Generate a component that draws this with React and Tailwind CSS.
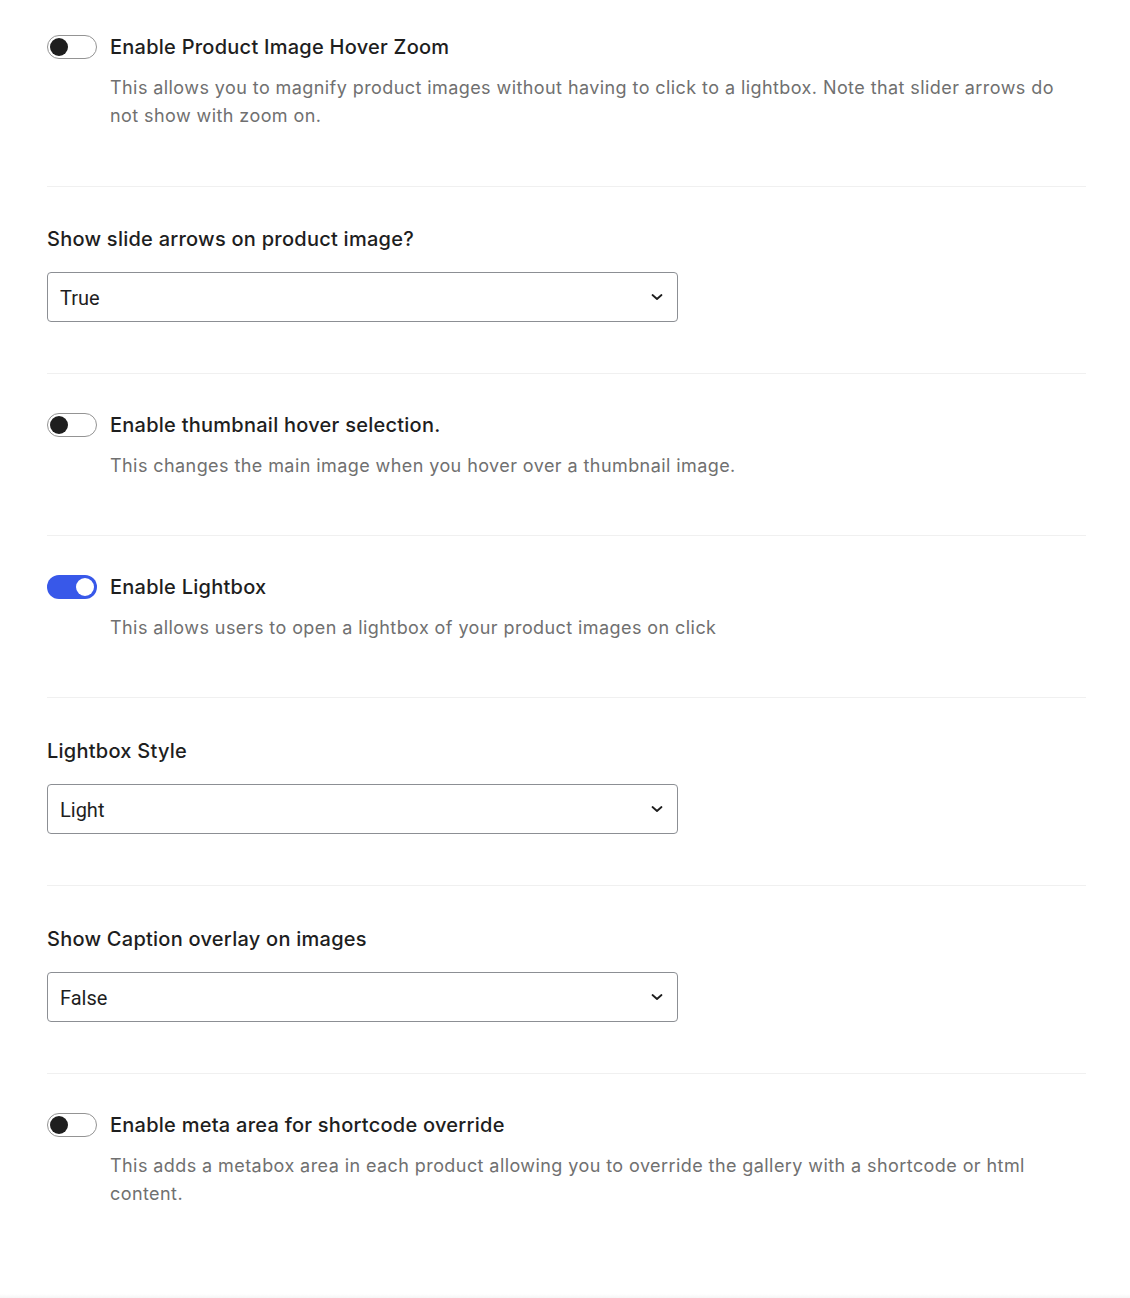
import React from 'react';

const font = { fontFamily: 'Inter, "Noto Sans", sans-serif' };

function Toggle({ on }) {
  return on ? (
    <div className="w-[50px] h-[24px] rounded-full bg-[#3858e9] flex items-center justify-end px-[3px] shrink-0">
      <div className="w-[18px] h-[18px] rounded-full bg-white" />
    </div>
  ) : (
    <div className="w-[50px] h-[24px] rounded-full border border-[#949494] bg-white flex items-center px-[2px] shrink-0">
      <div className="w-[18px] h-[18px] rounded-full bg-[#1e1e1e]" />
    </div>
  );
}

function ToggleSection({ on, label, desc, first, last }) {
  return (
    <div className={`${first ? 'pt-[35px]' : 'pt-[39px]'} ${last ? 'pb-[86px]' : first ? 'pb-[56px] border-b border-[#f0f0f0]' : 'pb-[55px] border-b border-[#f0f0f0]'}`}>
      <div className="flex items-center gap-[13px] h-[24px]">
        <Toggle on={on} />
        <span className="text-[20px] font-medium text-[#1e1e1e] leading-[28px] tracking-[0.25px]">{label}</span>
      </div>
      <p className="mt-[15px] pl-[63px] text-[18px] leading-[28px] text-[#707070] pr-[20px] tracking-[0.42px]">{desc}</p>
    </div>
  );
}

function SelectSection({ label, value, tight }) {
  return (
    <div className={`${tight ? 'pt-[38px]' : 'pt-[39px]'} pb-[51px] border-b border-[#f0f0f0]`}>
      <div className="text-[20px] font-medium text-[#1e1e1e] leading-[28px] tracking-[0.25px]">{label}</div>
      <div
        className="mt-[19px] w-[631px] h-[50px] border border-[#8c8f94] rounded-[4px] flex items-center justify-between pl-[12px] pr-[13px] text-[20px] text-[#1e1e1e]"
        style={{ fontFamily: 'Roboto, "Liberation Sans", sans-serif' }}
      >
        <span className="pt-[1px]">{value}</span>
        <svg width="14" height="14" viewBox="0 0 14 14" fill="none">
          <path d="M2.5 5l4.5 4 4.5-4" stroke="#1e1e1e" strokeWidth="1.8" strokeLinecap="round" strokeLinejoin="round" />
        </svg>
      </div>
    </div>
  );
}

export default function App() {
  return (
    <div className="min-h-[1298px] bg-white" style={font}>
      <div className="ml-[47px] w-[1039px]">
        <ToggleSection
          first
          label="Enable Product Image Hover Zoom"
          desc="This allows you to magnify product images without having to click to a lightbox. Note that slider arrows do not show with zoom on."
        />
        <SelectSection tight label="Show slide arrows on product image?" value="True" />
        <ToggleSection
          label="Enable thumbnail hover selection."
          desc="This changes the main image when you hover over a thumbnail image."
        />
        <ToggleSection
          on
          label="Enable Lightbox"
          desc="This allows users to open a lightbox of your product images on click"
        />
        <SelectSection label="Lightbox Style" value="Light" />
        <SelectSection label="Show Caption overlay on images" value="False" />
        <ToggleSection
          last
          label="Enable meta area for shortcode override"
          desc="This adds a metabox area in each product allowing you to override the gallery with a shortcode or html content."
        />
      </div>
      <div className="h-[5px] bg-gradient-to-b from-white to-[#f3f3f3]" />
    </div>
  );
}
